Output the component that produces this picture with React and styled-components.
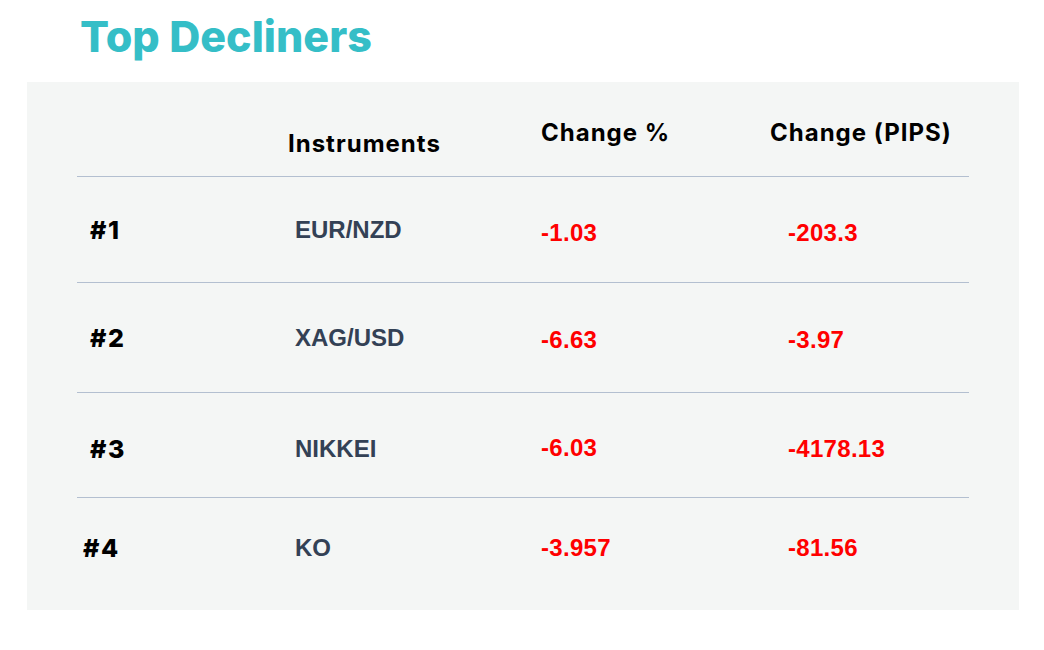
import styled, { createGlobalStyle } from 'styled-components';

const GlobalStyle = createGlobalStyle`
  html, body {
    margin: 0;
    padding: 0;
    background: #ffffff;
  }
`;

const decliners = [
  { rank: '#1', name: 'EUR/NZD', pct: '-1.03', pips: '-203.3', height: 106, nudge: [0, 0, 7, 7], rankShift: 13 },
  { rank: '#2', name: 'XAG/USD', pct: '-6.63', pips: '-3.97', height: 110, nudge: [0, 0, 5, 5], rankShift: 13 },
  { rank: '#3', name: 'NIKKEI', pct: '-6.03', pips: '-4178.13', height: 105, nudge: [7, 7, 5, 7], rankShift: 13 },
  { rank: '#4', name: 'KO', pct: '-3.957', pips: '-81.56', height: 100, nudge: [0, 0, 0, 0], rankShift: 6, last: true },
];

const Page = styled.div`
  width: 1044px;
  height: 650px;
  padding: 4px 0 0 27px;
  box-sizing: border-box;
`;

const Title = styled.h1`
  margin: 0 0 13px 53px;
  font-family: Inter, 'Noto Sans', sans-serif;
  font-weight: 800;
  font-size: 43px;
  line-height: 65px;
  letter-spacing: 0;
  color: #35bec7;
`;

const Panel = styled.div`
  width: 992px;
  height: 528px;
  background: #f4f6f5;
  padding: 0 50px;
  box-sizing: border-box;
`;

const Row = styled.div`
  display: grid;
  grid-template-columns: 211px 253px 229px 1fr;
  box-sizing: border-box;
  height: ${p => p.$height}px;
  border-bottom: ${p => (p.$last ? 'none' : '1px solid #b3bfd0')};
`;

const HeadCell = styled.div`
  display: flex;
  align-items: ${p => (p.$low ? 'flex-end' : 'flex-start')};
  padding-top: ${p => (p.$low ? 0 : 36)}px;
  padding-bottom: ${p => (p.$low ? 18 : 0)}px;
  font-family: Inter, 'Noto Sans', sans-serif;
  font-weight: 700;
  font-size: 24px;
  color: #000000;
  letter-spacing: 1px;
`;

const Cell = styled.div`
  display: flex;
  align-items: center;
  padding-left: ${p => p.$indent || 0}px;
  padding-top: ${p => p.$dy || 0}px;
  font-family: 'Liberation Sans', Arial, sans-serif;
  font-weight: 700;
  font-size: 24px;
`;

const Rank = styled(Cell)`
  font-family: Inter, 'Noto Sans', sans-serif;
  font-weight: 800;
  font-size: 25px;
  letter-spacing: 1.5px;
  color: #000000;
`;

const Name = styled(Cell)`
  color: #334155;
`;

const Value = styled(Cell)`
  color: #ff0000;
  letter-spacing: 0.3px;
`;

export default function App() {
  return (
    <Page>
      <GlobalStyle />
      <Title>Top Decliners</Title>
      <Panel>
        <Row $height={95}>
          <HeadCell />
          <HeadCell $low>Instruments</HeadCell>
          <HeadCell>Change %</HeadCell>
          <HeadCell>Change (PIPS)</HeadCell>
        </Row>
        {decliners.map(d => (
          <Row key={d.rank} $height={d.height} $last={d.last}>
            <Rank $indent={d.rankShift} $dy={d.nudge[0]}>{d.rank}</Rank>
            <Name $indent={7} $dy={d.nudge[1]}>{d.name}</Name>
            <Value $dy={d.nudge[2]}>{d.pct}</Value>
            <Value $indent={18} $dy={d.nudge[3]}>{d.pips}</Value>
          </Row>
        ))}
      </Panel>
    </Page>
  );
}
